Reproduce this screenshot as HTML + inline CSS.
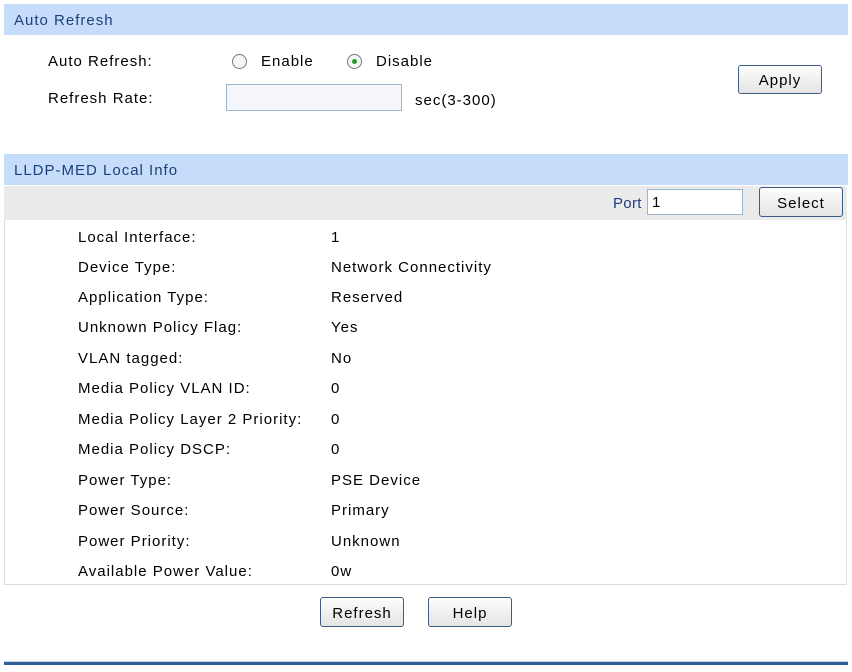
<!DOCTYPE html>
<html><head><style>
body{margin:0;width:852px;height:672px;background:#fff;font-family:"Liberation Sans",Arial,sans-serif;font-size:15px;letter-spacing:1px;color:#000;position:relative;overflow:hidden}
.a{position:absolute;white-space:nowrap}
.hd{position:absolute;left:4px;width:844px;height:31px;background:#c5dcfb;color:#1e3f7a;line-height:33px;text-indent:10px}
.btn{position:absolute;border:1px solid #3c5d84;border-radius:3px;background:linear-gradient(#fdfdfd,#e4e4e4);text-align:center;box-sizing:border-box}
.in{position:absolute;border:1px solid #9cb5cf;background:#f4f6fa;box-sizing:border-box}
.rad{position:absolute;width:15px;height:15px;border:1px solid #6e7c8c;border-radius:50%;background:#f6f6f6;box-sizing:border-box}
.row{position:absolute;left:78px;height:30px;line-height:32px}
</style></head><body>
<div class="hd" style="top:4px">Auto Refresh</div>
<div class="a" style="left:48px;top:53px">Auto Refresh:</div>
<div class="rad" style="left:232px;top:54px"></div>
<div class="a" style="left:261px;top:53px">Enable</div>
<div class="rad" style="left:347px;top:54px"><div style="width:5px;height:5px;background:#2a9b2a;border-radius:50%;margin:4px"></div></div>
<div class="a" style="left:376px;top:53px">Disable</div>
<div class="a" style="left:48px;top:90px">Refresh Rate:</div>
<div class="in" style="left:226px;top:84px;width:176px;height:27px"></div>
<div class="a" style="left:415px;top:92px">sec(3-300)</div>
<div class="btn" style="left:738px;top:65px;width:84px;height:29px;line-height:29px">Apply</div>

<div class="hd" style="top:154px">LLDP-MED Local Info</div>
<div class="a" style="left:4px;top:186px;width:843px;height:34px;background:#ebebeb"></div>
<div class="a" style="left:613px;top:195px;color:#1e3f7a;letter-spacing:0.3px">Port</div>
<div class="in" style="left:647px;top:189px;width:96px;height:26px;background:#fff;line-height:26px;padding-left:4px">1</div>
<div class="btn" style="left:759px;top:187px;width:84px;height:30px;line-height:31px">Select</div>
<div class="a" style="left:4px;top:220px;width:841px;height:364px;border:1px solid #dcdcdc;border-top:none"></div>
<div class="row" style="top:222px">Local Interface:</div><div class="row" style="left:331px;top:222px">1</div>
<div class="row" style="top:252px">Device Type:</div><div class="row" style="left:331px;top:252px">Network Connectivity</div>
<div class="row" style="top:282px">Application Type:</div><div class="row" style="left:331px;top:282px">Reserved</div>
<div class="row" style="top:312px">Unknown Policy Flag:</div><div class="row" style="left:331px;top:312px">Yes</div>
<div class="row" style="top:343px">VLAN tagged:</div><div class="row" style="left:331px;top:343px">No</div>
<div class="row" style="top:373px">Media Policy VLAN ID:</div><div class="row" style="left:331px;top:373px">0</div>
<div class="row" style="top:404px">Media Policy Layer 2 Priority:</div><div class="row" style="left:331px;top:404px">0</div>
<div class="row" style="top:434px">Media Policy DSCP:</div><div class="row" style="left:331px;top:434px">0</div>
<div class="row" style="top:465px">Power Type:</div><div class="row" style="left:331px;top:465px">PSE Device</div>
<div class="row" style="top:495px">Power Source:</div><div class="row" style="left:331px;top:495px">Primary</div>
<div class="row" style="top:526px">Power Priority:</div><div class="row" style="left:331px;top:526px">Unknown</div>
<div class="row" style="top:556px">Available Power Value:</div><div class="row" style="left:331px;top:556px">0w</div>
<div class="btn" style="left:320px;top:597px;width:84px;height:30px;line-height:31px">Refresh</div>
<div class="btn" style="left:428px;top:597px;width:84px;height:30px;line-height:31px">Help</div>
<div class="a" style="left:4px;top:661px;width:844px;height:3px;background:#2e5f98;border-top:1px solid #c9d6e6"></div>
</body></html>
